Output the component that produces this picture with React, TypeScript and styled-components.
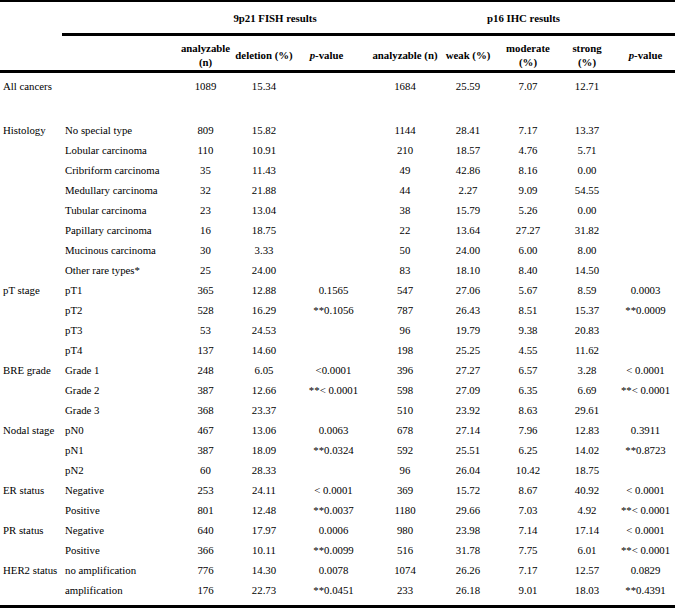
import React from 'react';
import styled, { createGlobalStyle } from 'styled-components';

const GlobalStyle = createGlobalStyle`
  html, body {
    margin: 0;
    padding: 0;
    background: #ffffff;
  }
  body {
    font-family: 'Liberation Serif', 'Times New Roman', serif;
    color: #000000;
  }
`;

const Frame = styled.div`
  width: 675px;
  border-top: 2px solid #000;
  border-bottom: 3px solid #000;
  padding-bottom: 5px;
`;

const Table = styled.table`
  width: 675px;
  table-layout: fixed;
  border-collapse: separate;
  border-spacing: 0;
  font-size: 10.8px;
`;

const HeadRow = styled.tr<{ h: number }>`
  height: ${({ h }) => `${h}px`};
`;

const HeadCell = styled.th<{ rule?: boolean; shift?: number; pr?: number }>`
  padding: 0;
  padding-top: ${({ shift }) => `${shift || 0}px`};
  padding-right: ${({ pr }) => `${pr || 0}px`};
  font-weight: bold;
  text-align: center;
  vertical-align: middle;
  line-height: 14px;
  white-space: nowrap;
  border-bottom: ${({ rule }) => (rule ? '3px solid #000' : 'none')};
  box-sizing: border-box;

  i {
    font-style: italic;
  }
`;

const Row = styled.tr<{ h?: number }>`
  height: ${({ h }) => `${h || 20}px`};
`;

const Label = styled.td`
  padding: 0 0 0 3px;
  text-align: left;
  vertical-align: middle;
  line-height: 20px;
  white-space: nowrap;
`;

const Cell = styled.td`
  padding: 0;
  text-align: center;
  vertical-align: middle;
  line-height: 20px;
  white-space: nowrap;
`;

const widths = [62, 116, 55, 62, 77, 66, 60, 60, 58, 59];

type Line = { group?: string; name: string; v: string[] };

const rows: Line[] = [
  { group: 'Histology', name: 'No special type', v: ['809', '15.82', '', '1144', '28.41', '7.17', '13.37', ''] },
  { name: 'Lobular carcinoma', v: ['110', '10.91', '', '210', '18.57', '4.76', '5.71', ''] },
  { name: 'Cribriform carcinoma', v: ['35', '11.43', '', '49', '42.86', '8.16', '0.00', ''] },
  { name: 'Medullary carcinoma', v: ['32', '21.88', '', '44', '2.27', '9.09', '54.55', ''] },
  { name: 'Tubular carcinoma', v: ['23', '13.04', '', '38', '15.79', '5.26', '0.00', ''] },
  { name: 'Papillary carcinoma', v: ['16', '18.75', '', '22', '13.64', '27.27', '31.82', ''] },
  { name: 'Mucinous carcinoma', v: ['30', '3.33', '', '50', '24.00', '6.00', '8.00', ''] },
  { name: 'Other rare types*', v: ['25', '24.00', '', '83', '18.10', '8.40', '14.50', ''] },
  { group: 'pT stage', name: 'pT1', v: ['365', '12.88', '0.1565', '547', '27.06', '5.67', '8.59', '0.0003'] },
  { name: 'pT2', v: ['528', '16.29', '**0.1056', '787', '26.43', '8.51', '15.37', '**0.0009'] },
  { name: 'pT3', v: ['53', '24.53', '', '96', '19.79', '9.38', '20.83', ''] },
  { name: 'pT4', v: ['137', '14.60', '', '198', '25.25', '4.55', '11.62', ''] },
  { group: 'BRE grade', name: 'Grade 1', v: ['248', '6.05', '<0.0001', '396', '27.27', '6.57', '3.28', '< 0.0001'] },
  { name: 'Grade 2', v: ['387', '12.66', '**< 0.0001', '598', '27.09', '6.35', '6.69', '**< 0.0001'] },
  { name: 'Grade 3', v: ['368', '23.37', '', '510', '23.92', '8.63', '29.61', ''] },
  { group: 'Nodal stage', name: 'pN0', v: ['467', '13.06', '0.0063', '678', '27.14', '7.96', '12.83', '0.3911'] },
  { name: 'pN1', v: ['387', '18.09', '**0.0324', '592', '25.51', '6.25', '14.02', '**0.8723'] },
  { name: 'pN2', v: ['60', '28.33', '', '96', '26.04', '10.42', '18.75', ''] },
  { group: 'ER status', name: 'Negative', v: ['253', '24.11', '< 0.0001', '369', '15.72', '8.67', '40.92', '< 0.0001'] },
  { name: 'Positive', v: ['801', '12.48', '**0.0037', '1180', '29.66', '7.03', '4.92', '**< 0.0001'] },
  { group: 'PR status', name: 'Negative', v: ['640', '17.97', '0.0006', '980', '23.98', '7.14', '17.14', '< 0.0001'] },
  { name: 'Positive', v: ['366', '10.11', '**0.0099', '516', '31.78', '7.75', '6.01', '**< 0.0001'] },
  { group: 'HER2 status', name: 'no amplification', v: ['776', '14.30', '0.0078', '1074', '26.26', '7.17', '12.57', '0.0829'] },
  { name: 'amplification', v: ['176', '22.73', '**0.0451', '233', '26.18', '9.01', '18.03', '**0.4391'] },
];

function App() {
  return (
    <>
      <GlobalStyle />
      <Frame>
        <Table>
          <colgroup>
            {widths.map((w, i) => (
              <col key={i} style={{ width: w }} />
            ))}
          </colgroup>
          <thead>
            <HeadRow h={34}>
              <HeadCell rowSpan={2} rule />
              <HeadCell rule />
              <HeadCell colSpan={3} rule>
                9p21 FISH results
              </HeadCell>
              <HeadCell colSpan={5} rule>
                p16 IHC results
              </HeadCell>
            </HeadRow>
            <HeadRow h={37}>
              <HeadCell rule />
              <HeadCell rule shift={3}>
                analyzable
                <br />
                (n)
              </HeadCell>
              <HeadCell rule shift={3}>deletion (%)</HeadCell>
              <HeadCell rule shift={3} pr={14}>
                <i>p</i>-value
              </HeadCell>
              <HeadCell rule shift={3}>analyzable (n)</HeadCell>
              <HeadCell rule shift={3}>weak (%)</HeadCell>
              <HeadCell rule shift={3}>
                moderate
                <br />
                (%)
              </HeadCell>
              <HeadCell rule shift={3}>
                strong
                <br />
                (%)
              </HeadCell>
              <HeadCell rule shift={3}>
                <i>p</i>-value
              </HeadCell>
            </HeadRow>
          </thead>
          <tbody>
            <Row h={25}>
              <Label colSpan={2}>All cancers</Label>
              <Cell>1089</Cell>
              <Cell>15.34</Cell>
              <Cell />
              <Cell>1684</Cell>
              <Cell>25.59</Cell>
              <Cell>7.07</Cell>
              <Cell>12.71</Cell>
              <Cell />
            </Row>
            <Row h={22}>
              <Cell colSpan={10} />
            </Row>
            {rows.map((r, i) => (
              <Row key={i}>
                <Label>{r.group || ''}</Label>
                <Label>{r.name}</Label>
                {r.v.map((x, j) => (
                  <Cell key={j}>{x}</Cell>
                ))}
              </Row>
            ))}
          </tbody>
        </Table>
      </Frame>
    </>
  );
}

export default App;
